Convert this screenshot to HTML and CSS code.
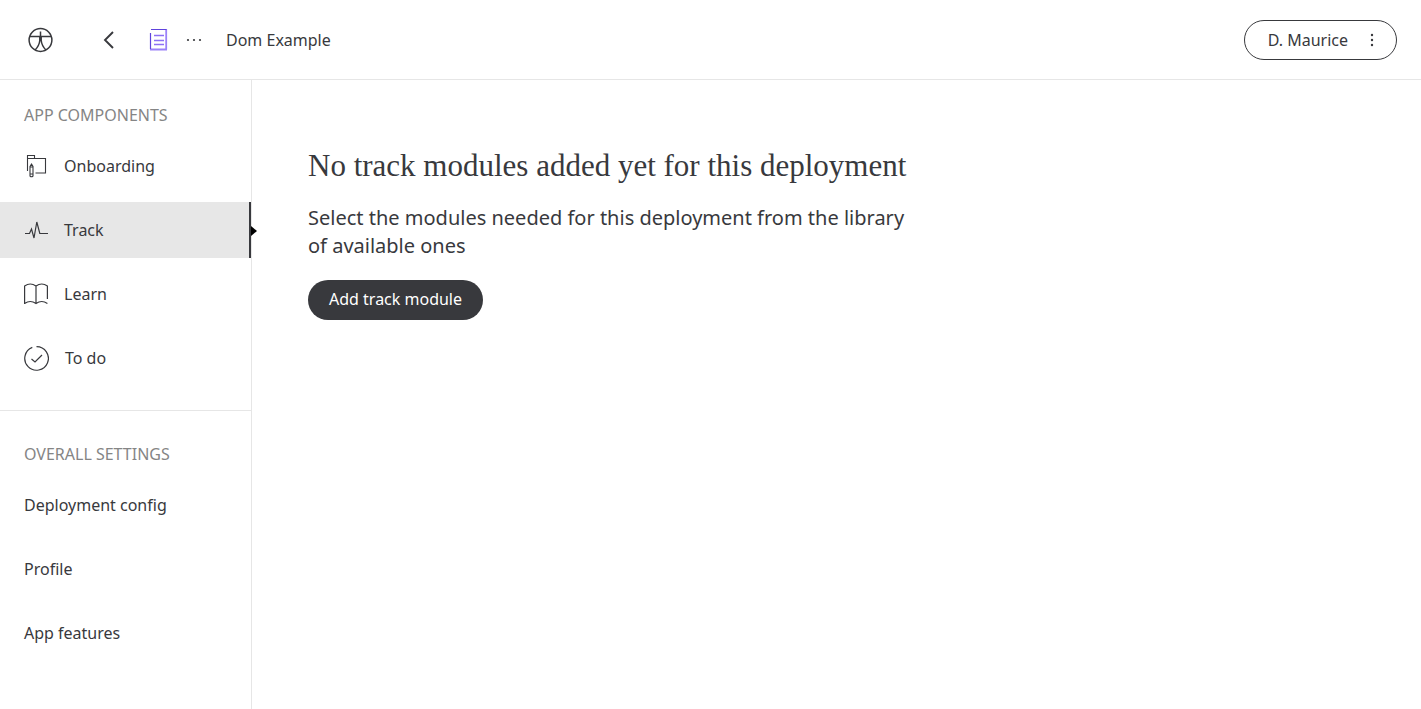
FILE: index.html
```html
<!DOCTYPE html>
<html lang="en">
<head>
<meta charset="utf-8">
<title>Dom Example</title>
<link rel="stylesheet" href="styles.css">
</head>
<body>
<header class="topbar">
  <a class="home" href="#" aria-label="Home">
    <svg width="25" height="26" viewBox="0 0 25 26" fill="none" stroke="currentColor" stroke-width="1.5"><circle cx="12.500" cy="13" r="11.4"/><path d="M2 9.500h21M12.500 4.500V14M11.800 9.500v4q-.6 5.500-4.800 9.500M13.200 9.500v4q.6 5.500 4.800 9.500"/></svg>
  </a>
  <button class="icon-button back" type="button" aria-label="Back">
    <svg width="12" height="18" viewBox="0 0 12 18" fill="none" stroke="currentColor" stroke-width="1.9"><path d="M10 1 2 9l8 8"/></svg>
  </button>
  <svg class="doc" width="19" height="23" viewBox="0 0 19 23" fill="none"><path stroke="#9b82f8" stroke-width="1.800" d="M17.200 1v20.500M1 21.500h17"/><path stroke="#8d70f5" stroke-width="1.300" d="M5 7.500h10M5 12.500h10M5 16.500h10"/><path stroke="#5f43dc" stroke-width="1.200" d="M2 1.500h15.500M1.500 5v16"/></svg>
  <button class="icon-button more" type="button" aria-label="More">
    <svg width="16" height="4" viewBox="0 0 16 4" fill="currentColor"><circle cx="2" cy="2" r="1.100"/><circle cx="8" cy="2" r="1.100"/><circle cx="14" cy="2" r="1.100"/></svg>
  </button>
  <span class="title">Dom Example</span>
  <button class="user" type="button">D. Maurice
    <svg width="4" height="16" viewBox="0 0 4 16" fill="currentColor"><circle cx="2" cy="3" r="1.200"/><circle cx="2" cy="8" r="1.200"/><circle cx="2" cy="13" r="1.200"/></svg>
  </button>
</header>
<div class="layout">
  <aside class="sidebar">
    <nav class="section" aria-labelledby="components">
      <h2 class="label" id="components">APP COMPONENTS</h2>
      <a class="item" href="#">
        <svg width="24" height="26" viewBox="0 0 24 26" fill="none" stroke="currentColor" stroke-width="1.100"><path d="M3.500 18V2.500h7v3M3.500 5.500h18v14.500H11.500"/><path d="M6 13.500 7.500 11 9 13.500v9.500q-1.500 1.500-3 0zM6 14h3M6 21h3"/></svg>
        Onboarding
      </a>
      <a class="item active" href="#" aria-current="page">
        <svg width="24" height="26" viewBox="0 0 24 26" fill="none" stroke="currentColor" stroke-width="1.200"><path d="M1 16.500h4.500l2-4.500 2.500 9L12.800 5l3 11.500H24"/></svg>
        Track
      </a>
      <a class="item" href="#">
        <svg width="24" height="26" viewBox="0 0 24 26" fill="none" stroke="currentColor" stroke-width="1.200"><path d="M.6 23V5q5.700-4 11.400 0 5.700-4 11.400 0v13M12 5v18M.6 22.500q5.700-4 11.400 0 5.700-4 11.400 0"/></svg>
        Learn
      </a>
      <a class="item" href="#">
        <svg width="25" height="26" viewBox="0 0 25 26" fill="none" stroke="currentColor" stroke-width="1.200"><path d="M12.500 1.600a11.800 11.800 0 1 1-4.200.8M7.500 14l3.500 3 7-7"/></svg>
        To do
      </a>
    </nav>
    <nav class="section" aria-labelledby="settings">
      <h2 class="label" id="settings">OVERALL SETTINGS</h2>
      <a class="item" href="#">Deployment config</a>
      <a class="item" href="#">Profile</a>
      <a class="item" href="#">App features</a>
    </nav>
  </aside>
  <main class="content">
    <h1 class="heading">No track modules added yet for this deployment</h1>
    <p class="lead">Select the modules needed for this deployment from the library of available ones</p>
    <button class="primary" type="button">Add track module</button>
  </main>
</div>
</body>
</html>
```

FILE: styles.css
```css
* {
  box-sizing: border-box;
}

body {
  margin: 0;
  min-height: 100vh;
  display: flex;
  flex-direction: column;
  background: #fff;
  color: #38393d;
  font: 16px/24px "Noto Sans", sans-serif;
}

button {
  font: inherit;
  cursor: pointer;
}

a {
  color: inherit;
  text-decoration: none;
}

svg {
  display: block;
  flex: none;
}

.topbar {
  display: flex;
  align-items: center;
  height: 80px;
  padding: 0 24px 0 28px;
  border-bottom: 1px solid #e6e6e6;
}

.icon-button {
  padding: 0;
  border: 0;
  background: none;
  color: inherit;
}

.back {
  margin-left: 50px;
}

.doc {
  margin-left: 34px;
}

.more {
  margin: 0 24px 0 18px;
}

.user {
  display: flex;
  align-items: center;
  gap: 22px;
  height: 40px;
  margin-left: auto;
  padding: 0 22px 0 23px;
  border: 1px solid #38393d;
  border-radius: 20px;
  background: #fff;
  color: inherit;
}

.layout {
  display: flex;
  flex: 1;
}

.sidebar {
  flex: none;
  width: 252px;
  border-right: 1px solid #e6e6e6;
}

.section {
  display: flex;
  flex-direction: column;
  gap: 8px;
  padding: 24px 0;
}

.section + .section {
  padding-top: 32px;
  border-top: 1px solid #e6e6e6;
}

.label {
  margin: 0;
  padding: 0 24px 4px;
  color: #858585;
  font-size: 16px;
  font-weight: 400;
  line-height: 22px;
}

.item {
  display: flex;
  align-items: center;
  gap: 16px;
  height: 56px;
  padding: 0 24px;
}

.active {
  position: relative;
  border-right: 2px solid #38393d;
  background: #e7e7e7;
}

.active::after {
  content: "";
  position: absolute;
  top: 24px;
  right: -8px;
  border: 5px solid transparent;
  border-right: 0;
  border-left: 6px solid #000;
}

.content {
  flex: 1;
  padding: 64px 56px;
}

.heading {
  margin: 0 0 16px;
  font: 400 31px/44px "Liberation Serif", serif;
}

.lead {
  max-width: 608px;
  margin: 0 0 20px;
  font-size: 20px;
  line-height: 28px;
}

.primary {
  height: 40px;
  padding: 0 21px 2px;
  border: 0;
  border-radius: 20px;
  background: #38393d;
  color: #fff;
}
```
